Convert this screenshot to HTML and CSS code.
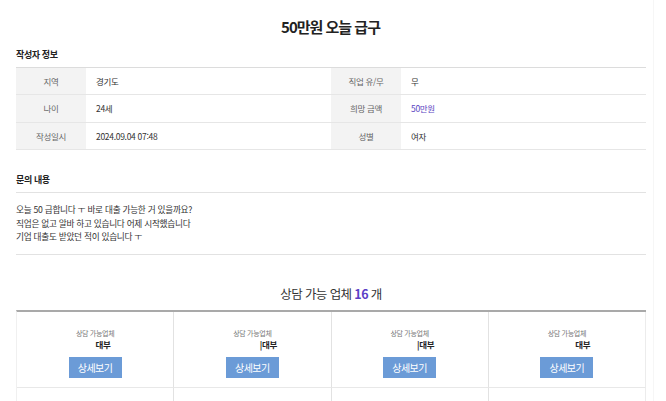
FILE: index.html
```html
<!DOCTYPE html>
<html lang="ko">
<head>
<meta charset="utf-8">
<link rel="stylesheet" href="styles.css">
</head>
<body>
<div class="page">
  <h1 class="title">50만원 오늘 급구</h1>

  <h2 class="sec-title">작성자 정보</h2>
  <div class="info">
    <div class="lbl">지역</div><div class="val">경기도</div>
    <div class="lbl">직업 유/무</div><div class="val">무</div>
    <div class="lbl">나이</div><div class="val">24세</div>
    <div class="lbl">희망 금액</div><div class="val purple">50만원</div>
    <div class="lbl">작성일시</div><div class="val">2024.09.04 07:48</div>
    <div class="lbl">성별</div><div class="val">여자</div>
  </div>

  <h2 class="sec-title q-title">문의 내용</h2>
  <div class="q-body">
    <p>오늘 50 급합니다 ㅜ 바로 대출 가능한 거 있을까요?</p>
    <p>직업은 없고 알바 하고 있습니다 어제 시작했습니다</p>
    <p>기업 대출도 받았던 적이 있습니다 ㅜ</p>
  </div>

  <h2 class="co-title">상담 가능 업체 <b>16</b> 개</h2>
  <div class="cards">
    <div class="card">
      <div class="c-label">상담 가능업체</div>
      <div class="c-name c-name--a">대부</div>
      <button class="c-btn">상세보기</button>
    </div>
    <div class="card">
      <div class="c-label">상담 가능업체</div>
      <div class="c-name">|대부</div>
      <button class="c-btn">상세보기</button>
    </div>
    <div class="card">
      <div class="c-label">상담 가능업체</div>
      <div class="c-name">|대부</div>
      <button class="c-btn">상세보기</button>
    </div>
    <div class="card">
      <div class="c-label">상담 가능업체</div>
      <div class="c-name">대부</div>
      <button class="c-btn">상세보기</button>
    </div>
    <div class="card card--next"></div>
    <div class="card card--next"></div>
    <div class="card card--next"></div>
    <div class="card card--next"></div>
  </div>
</div>
</body>
</html>
```

FILE: styles.css
```css
* { box-sizing: border-box; }
html, body {
  margin: 0;
  padding: 0;
  background: #fff;
}
body {
  font-family: "Noto Sans CJK KR", "Noto Sans", sans-serif;
  color: #333;
  overflow: hidden;
  height: 401px;
}
.page {
  width: 654px;
  padding: 0 8px 0 16px;
  border-right: 1px solid #f6f6f6;
}
.title {
  margin: 0;
  padding-top: 17px;
  height: 44px;
  text-align: center;
  font-size: 15px;
  line-height: 20px;
  font-weight: 700;
  letter-spacing: -1px;
  color: #222;
}
.sec-title {
  margin: 0;
  font-size: 9px;
  line-height: 12px;
  font-weight: 700;
  letter-spacing: -0.4px;
  color: #222;
  padding-top: 5px;
  height: 22.5px;
}
.info {
  display: grid;
  grid-template-columns: 70px 1fr 70px 1fr;
  width: 630px;
  border-top: 1px solid #dcdcdc;
}
.lbl, .val {
  height: 27.5px;
  display: flex;
  align-items: center;
  font-size: 8.5px;
  letter-spacing: -0.3px;
  border-bottom: 1px solid #e6e6e6;
}
.lbl {
  background: #f3f3f3;
  justify-content: center;
  color: #666;
}
.val {
  padding-left: 10px;
  color: #333;
}
.purple { color: #5a45c2; }
.q-title {
  margin-top: 24px;
  padding-top: 0;
  height: 19px;
  border-bottom: 1px solid #e2e2e2;
  width: 630px;
}
.q-body {
  width: 630px;
  padding: 10px 0 12px;
  border-bottom: 1px solid #e2e2e2;
  height: 62px;
}
.q-body p {
  margin: 0;
  font-size: 8.7px;
  line-height: 13.7px;
  letter-spacing: -0.3px;
  color: #333;
}
.co-title {
  margin: 0;
  width: 630px;
  padding-top: 31px;
  height: 55px;
  text-align: center;
  font-size: 12.5px;
  line-height: 16px;
  font-weight: 400;
  letter-spacing: -0.6px;
  color: #333;
}
.co-title b {
  color: #5a3fc6;
  font-weight: 700;
}
.cards {
  width: 630px;
  display: grid;
  grid-template-columns: repeat(4, 1fr);
  border-top: 2px solid #a9a9a9;
  border-left: 1px solid #f0f0f0;
}
.card {
  height: 76px;
  border-right: 1px solid #e2e2e2;
  border-bottom: 1px solid #e8e8e8;
  display: flex;
  flex-direction: column;
  align-items: center;
  padding-top: 16px;
}
.card:nth-child(4n) { border-right-color: #ececec; }
.card--next { height: 5px; border-bottom: none; }
.c-label {
  font-size: 7px;
  line-height: 10px;
  color: #777;
  letter-spacing: -0.3px;
}
.c-name {
  font-size: 8.5px;
  line-height: 12px;
  font-weight: 700;
  color: #222;
  padding-left: 32px;
  letter-spacing: -0.3px;
}
.c-name--a { padding-left: 16px; }
.c-btn {
  margin-top: 7px;
  width: 53px;
  height: 21px;
  border: none;
  background: #6b9bd7;
  color: #fff;
  font-family: "Noto Sans CJK KR", sans-serif;
  font-size: 10px;
  letter-spacing: -0.5px;
  padding: 0;
}
```
